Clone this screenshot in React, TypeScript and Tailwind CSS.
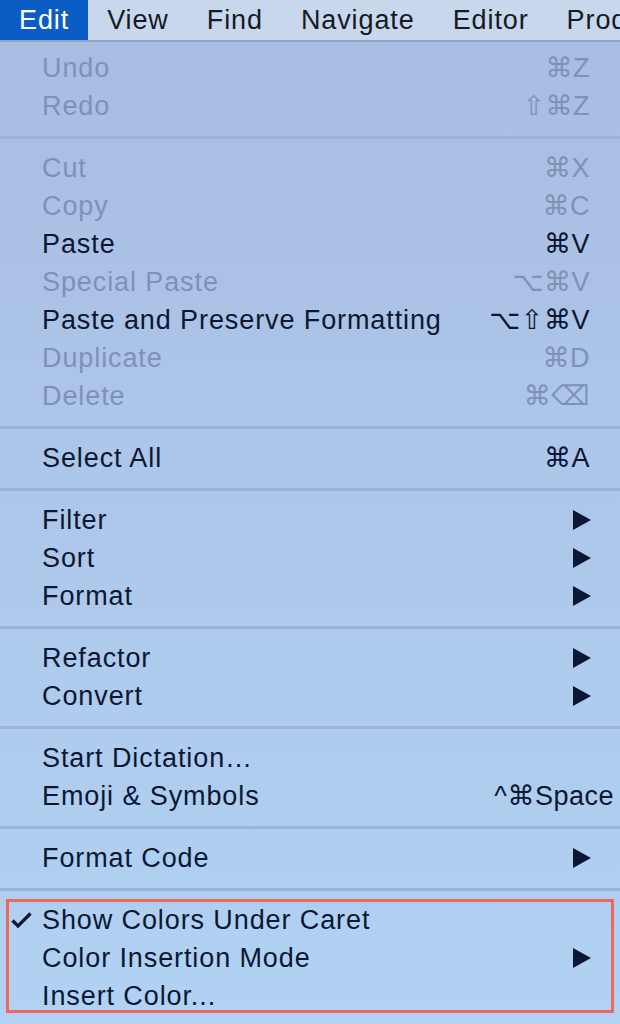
import React from 'react';

type Item = {
  label: string;
  shortcut?: string;
  disabled?: boolean;
  submenu?: boolean;
  checked?: boolean;
  wide?: boolean;
};

const groups: Item[][] = [
  [
    { label: 'Undo', shortcut: '⌘Z', disabled: true },
    { label: 'Redo', shortcut: '⇧⌘Z', disabled: true },
  ],
  [
    { label: 'Cut', shortcut: '⌘X', disabled: true },
    { label: 'Copy', shortcut: '⌘C', disabled: true },
    { label: 'Paste', shortcut: '⌘V' },
    { label: 'Special Paste', shortcut: '⌥⌘V', disabled: true },
    { label: 'Paste and Preserve Formatting', shortcut: '⌥⇧⌘V' },
    { label: 'Duplicate', shortcut: '⌘D', disabled: true },
    { label: 'Delete', shortcut: '⌘⌫', disabled: true },
  ],
  [{ label: 'Select All', shortcut: '⌘A' }],
  [
    { label: 'Filter', submenu: true },
    { label: 'Sort', submenu: true },
    { label: 'Format', submenu: true },
  ],
  [
    { label: 'Refactor', submenu: true },
    { label: 'Convert', submenu: true },
  ],
  [
    { label: 'Start Dictation…' },
    { label: 'Emoji & Symbols', shortcut: '^⌘Space', wide: true },
  ],
  [{ label: 'Format Code', submenu: true }],
];

const highlighted: Item[] = [
  { label: 'Show Colors Under Caret', checked: true },
  { label: 'Color Insertion Mode', submenu: true },
  { label: 'Insert Color...' },
];

const menus = ['Edit', 'View', 'Find', 'Navigate', 'Editor', 'Product'];

function Row({ item }: { item: Item }) {
  const tone = item.disabled ? 'text-[#7d92b6]' : 'text-[#0b1733]';
  return (
    <div className={`flex h-[38px] items-center ${tone}`}>
      <span className="flex w-[42px] shrink-0 justify-end pr-[10px]">
        {item.checked && (
          <svg width="21" height="16" viewBox="0 0 21 16" fill="none">
            <path d="M1.5 8.5 L7 14 L19.5 1.5" stroke="currentColor" strokeWidth="3.2" strokeLinejoin="miter" />
          </svg>
        )}
      </span>
      <span className="flex-1 whitespace-nowrap tracking-[0.9px]">{item.label}</span>
      {item.shortcut && (
        <span
          className={`whitespace-nowrap font-['Liberation_Sans','DejaVu_Sans',sans-serif] text-[27px] tracking-[0.5px] ${
            item.wide ? 'pr-[6px]' : 'pr-[30px]'
          }`}
        >
          {item.shortcut}
        </span>
      )}
      {item.submenu && (
        <span className="pr-[29px]">
          <svg width="18" height="20" viewBox="0 0 18 20">
            <path d="M0 0 L18 10 L0 20 Z" fill="currentColor" />
          </svg>
        </span>
      )}
    </div>
  );
}

function Separator() {
  return (
    <div className="flex h-[24px] items-center">
      <div className="h-[3px] w-full bg-[#9cb2d6]" />
    </div>
  );
}

export default function App() {
  return (
    <div className="h-[1024px] w-[620px] overflow-hidden bg-gradient-to-b from-[#a8bce0] via-[#adc7ea] to-[#b1d2f3] font-['Liberation_Sans',Arial,sans-serif] text-[27px] leading-none">
      <div className="flex h-[42px] items-center overflow-hidden whitespace-nowrap border-b-2 border-[#8ea4c6] bg-[#c9d7ec] text-[#151a24]">
        {menus.map((m, i) => (
          <div
            key={m}
            className={`flex h-full shrink-0 items-center px-[19px] tracking-[0.9px] ${i === 0 ? 'bg-[#0b5cc5] text-white' : ''}`}
          >
            {m}
          </div>
        ))}
      </div>
      <div className="pt-[7px]">
        {groups.map((g, gi) => (
          <div key={gi}>
            {g.map((item) => (
              <Row key={item.label} item={item} />
            ))}
            <Separator />
          </div>
        ))}
        <div className="relative">
          {highlighted.map((item) => (
            <Row key={item.label} item={item} />
          ))}
          <div className="absolute bottom-[2px] left-[6px] right-[6px] top-[-2px] border-[3px] border-[#ec6a5c]" />
        </div>
      </div>
    </div>
  );
}
